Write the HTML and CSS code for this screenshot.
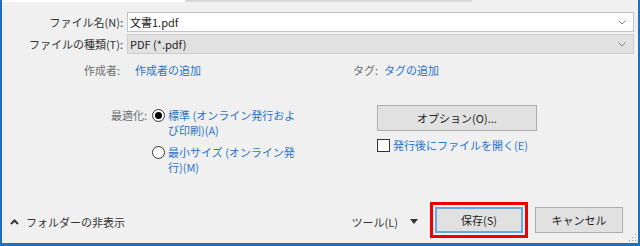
FILE: index.html
```html
<!DOCTYPE html>
<html lang="ja">
<head>
    <meta charset="UTF-8">
    <title>名前を付けて保存</title>
    <link rel="stylesheet" href="styles.css">
</head>
<body>
    <div class="window">
        <!-- 上のリスト領域の下端 -->
        <div class="strip">
            <span class="strip-white"></span>
            <span class="strip-grey"></span>
        </div>

        <!-- ファイル名・種類 -->
        <div class="fields">
            <label class="field-label">ファイル名(N):</label>
            <div class="combo combo-edit">
                <span>文書1.pdf</span>
                <svg class="chev" width="8" height="5" viewBox="0 0 8 5"><polyline points="0.5,0.5 4,4 7.5,0.5" fill="none" stroke="#808080" stroke-width="1"/></svg>
            </div>
            <label class="field-label">ファイルの種類(T):</label>
            <div class="combo combo-list">
                <span>PDF (*.pdf)</span>
                <svg class="chev" width="8" height="5" viewBox="0 0 8 5"><polyline points="0.5,0.5 4,4 7.5,0.5" fill="none" stroke="#808080" stroke-width="1"/></svg>
            </div>
        </div>

        <!-- プロパティ -->
        <div class="meta">
            <span class="meta-label">作成者:</span>
            <a class="link meta-value">作成者の追加</a>
            <span class="meta-label tag-label">タグ:</span>
            <a class="link">タグの追加</a>
        </div>

        <!-- 最適化とオプション -->
        <div class="options-area">
            <div class="optimize">
                <span class="opt-label">最適化:</span>
                <div class="radios">
                    <div class="radio">
                        <span class="radio-circle checked"></span>
                        <span class="link">標準 (オンライン発行およ<br>び印刷)(A)</span>
                    </div>
                    <div class="radio">
                        <span class="radio-circle"></span>
                        <span class="link">最小サイズ (オンライン発<br>行)(M)</span>
                    </div>
                </div>
            </div>
            <div class="right-col">
                <button class="btn btn-wide">オプション(O)...</button>
                <label class="check">
                    <span class="check-box"></span>
                    <span class="link">発行後にファイルを開く(E)</span>
                </label>
            </div>
        </div>

        <!-- 下部ボタン -->
        <div class="footer">
            <div class="toggle">
                <svg width="9" height="6" viewBox="0 0 9 6"><polyline points="1,5 4.5,1.5 8,5" fill="none" stroke="#333" stroke-width="2"/></svg>
                <span>フォルダーの非表示</span>
            </div>
            <div class="tools">
                <span>ツール(L)</span>
                <svg width="8" height="5" viewBox="0 0 8 5"><polygon points="0,0 8,0 4,5" fill="#333"/></svg>
            </div>
            <button class="btn btn-save">保存(S)</button>
            <button class="btn btn-cancel">キャンセル</button>
        </div>

        <svg class="grip" width="9" height="9" viewBox="0 0 9 9">
            <rect x="7" y="1" width="1" height="1" fill="#a0a0a0"/>
            <rect x="4" y="4" width="1" height="1" fill="#a0a0a0"/>
            <rect x="7" y="4" width="1" height="1" fill="#a0a0a0"/>
            <rect x="1" y="7" width="1" height="1" fill="#a0a0a0"/>
            <rect x="4" y="7" width="1" height="1" fill="#a0a0a0"/>
            <rect x="7" y="7" width="1" height="1" fill="#a0a0a0"/>
        </svg>
    </div>
</body>
</html>
```

FILE: styles.css
```css
/* 基本 */
* {
    box-sizing: border-box;
}

body {
    margin: 0;
    font-family: "Noto Sans CJK JP", "Noto Sans", sans-serif;
    font-size: 11px;
    color: #333;
}

.window {
    position: relative;
    display: flex;
    flex-direction: column;
    width: 640px;
    height: 246px;
    background: #f0f0f0;
    border-left: 2px solid #1f6fbf;
    border-right: 2px solid #1f6fbf;
    border-bottom: 3px solid #1f6fbf;
}

/* 上端の帯 */
.strip {
    display: flex;
    height: 2px;
}

.strip-white {
    width: 183px;
    background: #ffffff;
}

.strip-grey {
    width: 287px;
    background: #d6d6d6;
}

/* ファイル名・種類 */
.fields {
    display: grid;
    grid-template-columns: 121px 1fr;
    column-gap: 4px;
    row-gap: 2px;
    margin-top: 10px;
    padding-right: 4px;
}

.field-label {
    text-align: right;
    line-height: 20px;
    color: #333;
}

.combo {
    display: flex;
    align-items: center;
    justify-content: space-between;
    height: 20px;
    padding: 0 7px 0 2px;
    line-height: 18px;
    color: #222;
}

.combo-edit {
    background: #ffffff;
    border: 1px solid #c4c4c4;
}

.combo-list {
    background: #e1e1e1;
    border: 1px solid #cccccc;
}

/* プロパティ */
.meta {
    display: grid;
    grid-template-columns: 118px 233px 31px auto;
    margin-top: 8px;
    line-height: 16px;
}

.meta-label {
    text-align: right;
    color: #6d6d6d;
}

.tag-label {
    text-align: left;
}

.meta-value {
    padding-left: 15px;
}

.link {
    color: #2a74c9;
}

/* 最適化 */
.options-area {
    display: flex;
    margin-top: 27px;
}

.optimize {
    display: flex;
    width: 375px;
    padding-top: 3px;
    line-height: 15px;
}

.opt-label {
    width: 145px;
    text-align: right;
    color: #6d6d6d;
}

.radios {
    display: flex;
    flex-direction: column;
    gap: 7px;
    margin-left: 5px;
}

.radio {
    display: flex;
    align-items: flex-start;
    gap: 3px;
}

.radio-circle {
    position: relative;
    flex: none;
    width: 13px;
    height: 13px;
    margin-top: 1px;
    border: 1px solid #333;
    border-radius: 50%;
    background: #ffffff;
}

.radio-circle.checked::after {
    content: '';
    position: absolute;
    top: 2px;
    left: 2px;
    width: 7px;
    height: 7px;
    border-radius: 50%;
    background: #000;
}

/* 右の列 */
.right-col {
    display: flex;
    flex-direction: column;
}

.btn {
    height: 26px;
    padding: 0;
    font-family: inherit;
    font-size: 11px;
    color: #222;
    background: #e1e1e1;
    border: 1px solid #adadad;
}

.btn-wide {
    width: 160px;
}

.check {
    display: flex;
    align-items: center;
    gap: 3px;
    margin-top: 7px;
    line-height: 14px;
}

.check-box {
    width: 13px;
    height: 13px;
    border: 1px solid #333;
    background: #ffffff;
}

/* 下部 */
.footer {
    display: flex;
    align-items: center;
    margin-top: auto;
    padding: 0 15px 10px 8px;
}

.toggle {
    display: flex;
    align-items: center;
    gap: 7px;
    padding-top: 3px;
}

.tools {
    display: flex;
    align-items: center;
    gap: 12px;
    margin-left: auto;
    padding-top: 3px;
}

.btn-save {
    width: 88px;
    margin-left: 17px;
    border: 2px solid #6aa6e0;
    outline: 3px solid #ee0000;
    outline-offset: 2px;
}

.btn-cancel {
    width: 88px;
    margin-left: 12px;
}

.grip {
    position: absolute;
    right: 1px;
    bottom: 1px;
}
```
